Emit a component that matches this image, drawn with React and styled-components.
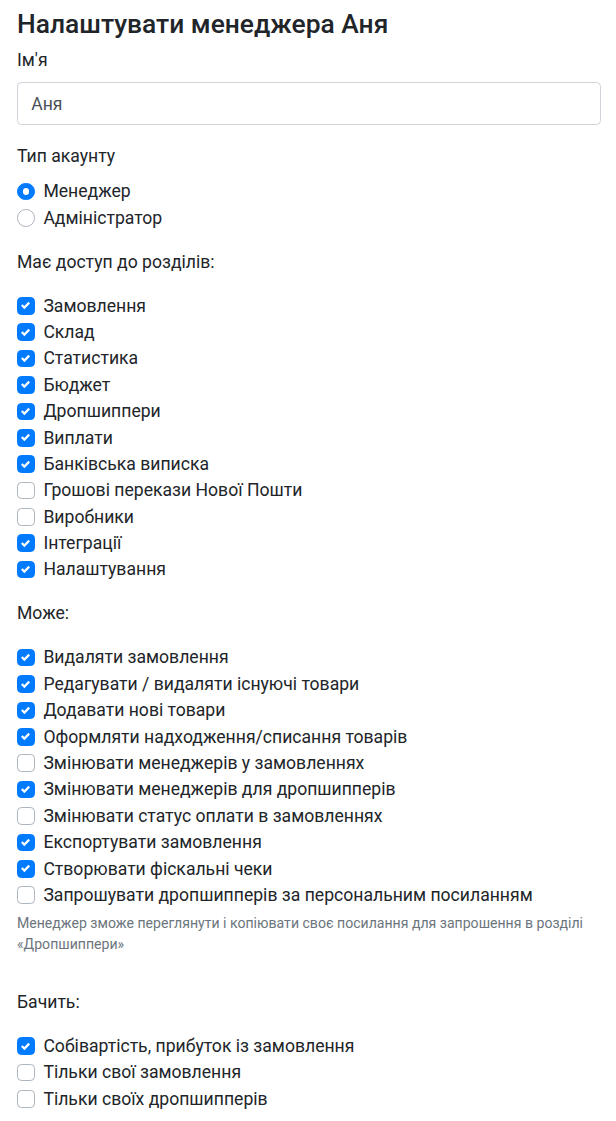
import React, { useState } from 'react';
import styled, { createGlobalStyle } from 'styled-components';

const GlobalStyle = createGlobalStyle`
  * { box-sizing: border-box; }
  body {
    margin: 0;
    background: #fff;
    font-family: Roboto, "Liberation Sans", Arial, sans-serif;
    font-size: 17.6px;
    line-height: 26.4px;
    color: #212529;
  }
`;

const sections = [
  { id: 'orders', label: 'Замовлення', on: true },
  { id: 'stock', label: 'Склад', on: true },
  { id: 'stats', label: 'Статистика', on: true },
  { id: 'budget', label: 'Бюджет', on: true },
  { id: 'drop', label: 'Дропшиппери', on: true },
  { id: 'payouts', label: 'Виплати', on: true },
  { id: 'bank', label: 'Банківська виписка', on: true },
  { id: 'np', label: 'Грошові перекази Нової Пошти', on: false },
  { id: 'makers', label: 'Виробники', on: false },
  { id: 'integr', label: 'Інтеграції', on: true },
  { id: 'settings', label: 'Налаштування', on: true },
];

const abilities = [
  { id: 'delOrders', label: 'Видаляти замовлення', on: true },
  { id: 'editGoods', label: 'Редагувати / видаляти існуючі товари', on: true },
  { id: 'addGoods', label: 'Додавати нові товари', on: true },
  { id: 'receipts', label: 'Оформляти надходження/списання товарів', on: true },
  { id: 'mgrOrders', label: 'Змінювати менеджерів у замовленнях', on: false },
  { id: 'mgrDrop', label: 'Змінювати менеджерів для дропшипперів', on: true },
  { id: 'payStatus', label: 'Змінювати статус оплати в замовленнях', on: false },
  { id: 'export', label: 'Експортувати замовлення', on: true },
  { id: 'fiscal', label: 'Створювати фіскальні чеки', on: true },
  { id: 'invite', label: 'Запрошувати дропшипперів за персональним посиланням', on: false },
];

const visibility = [
  { id: 'cost', label: 'Собівартість, прибуток із замовлення', on: true },
  { id: 'ownOrders', label: 'Тільки свої замовлення', on: false },
  { id: 'ownDrop', label: 'Тільки своїх дропшипперів', on: false },
];

const toMap = (list) => Object.fromEntries(list.map((i) => [i.id, i.on]));

const CheckIcon = () => (
  <svg width="9" height="9" viewBox="0 0 8 8">
    <path fill="#fff" d="M6.564.75l-3.59 3.612-1.538-1.55L0 4.26l2.974 2.99L8 2.193z" />
  </svg>
);

const CheckList = ({ items, values, onToggle }) => (
  <Group>
    {items.map((item) => (
      <Row key={item.id} onClick={() => onToggle(item.id)}>
        <Box $checked={values[item.id]}>{values[item.id] && <CheckIcon />}</Box>
        {item.label}
      </Row>
    ))}
  </Group>
);

const App = () => {
  const [name, setName] = useState('Аня');
  const [role, setRole] = useState('manager');
  const [access, setAccess] = useState(toMap(sections));
  const [can, setCan] = useState(toMap(abilities));
  const [sees, setSees] = useState(toMap(visibility));

  const toggle = (setter) => (id) => setter((prev) => ({ ...prev, [id]: !prev[id] }));

  return (
    <Page>
      <GlobalStyle />
      <Title>Налаштувати менеджера Аня</Title>

      <FormGroup>
        <Label>Ім'я</Label>
        <Input value={name} onChange={(e) => setName(e.target.value)} />
      </FormGroup>

      <FormGroup>
        <Label>Тип акаунту</Label>
        {[
          { id: 'manager', label: 'Менеджер' },
          { id: 'admin', label: 'Адміністратор' },
        ].map((r) => (
          <Row key={r.id} onClick={() => setRole(r.id)}>
            <Radio $checked={role === r.id} />
            {r.label}
          </Row>
        ))}
      </FormGroup>

      <Caption>Має доступ до розділів:</Caption>
      <CheckList items={sections} values={access} onToggle={toggle(setAccess)} />

      <Caption>Може:</Caption>
      <FormGroup>
        <CheckList items={abilities} values={can} onToggle={toggle(setCan)} />
        <Hint>
          Менеджер зможе переглянути і копіювати своє посилання для запрошення в розділі
          «Дропшиппери»
        </Hint>
      </FormGroup>

      <Caption $spaced>Бачить:</Caption>
      <CheckList items={visibility} values={sees} onToggle={toggle(setSees)} />
    </Page>
  );
};

const Page = styled.div`
  padding: 0 15px 0 17px;
`;

const Title = styled.h4`
  margin: 9px 0 6px;
  font-size: 26.4px;
  font-weight: 500;
  line-height: 1.2;
`;

const FormGroup = styled.div`
  margin-bottom: 17.6px;
`;

const Group = styled.div`
  margin-bottom: 17.6px;

  ${FormGroup} & {
    margin-bottom: 0;
  }
`;

const Label = styled.label`
  display: block;
  margin-bottom: 8.8px;
`;

const Caption = styled.p`
  margin: 0 0 17.6px;
  padding-top: ${(p) => (p.$spaced ? '16.5px' : '0')};
`;

const Input = styled.input`
  display: block;
  width: 100%;
  height: 43.5px;
  padding: 6.6px 13.2px;
  font-family: inherit;
  font-size: 17.6px;
  line-height: 26.4px;
  color: #495057;
  background: #fff;
  border: 1px solid #ced4da;
  border-radius: 4.4px;
  outline: none;
`;

const Row = styled.div`
  display: flex;
  align-items: center;
  height: 26.4px;
  cursor: pointer;
  user-select: none;
`;

const Box = styled.span`
  flex: none;
  display: flex;
  align-items: center;
  justify-content: center;
  width: 17.6px;
  height: 17.6px;
  margin-right: 8.8px;
  border-radius: 4.4px;
  background: ${(p) => (p.$checked ? '#007bff' : '#fff')};
  border: 1px solid ${(p) => (p.$checked ? '#007bff' : '#adb5bd')};
`;

const Radio = styled.span`
  flex: none;
  display: flex;
  align-items: center;
  justify-content: center;
  width: 17.6px;
  height: 17.6px;
  margin-right: 8.8px;
  border-radius: 50%;
  background: ${(p) => (p.$checked ? '#007bff' : '#fff')};
  border: 1px solid ${(p) => (p.$checked ? '#007bff' : '#adb5bd')};

  &::after {
    content: '';
    display: ${(p) => (p.$checked ? 'block' : 'none')};
    width: 6.6px;
    height: 6.6px;
    border-radius: 50%;
    background: #fff;
  }
`;

const Hint = styled.small`
  display: block;
  margin-top: 4.4px;
  font-size: 14.08px;
  line-height: 21.12px;
  color: #6c757d;
`;

export default App;
